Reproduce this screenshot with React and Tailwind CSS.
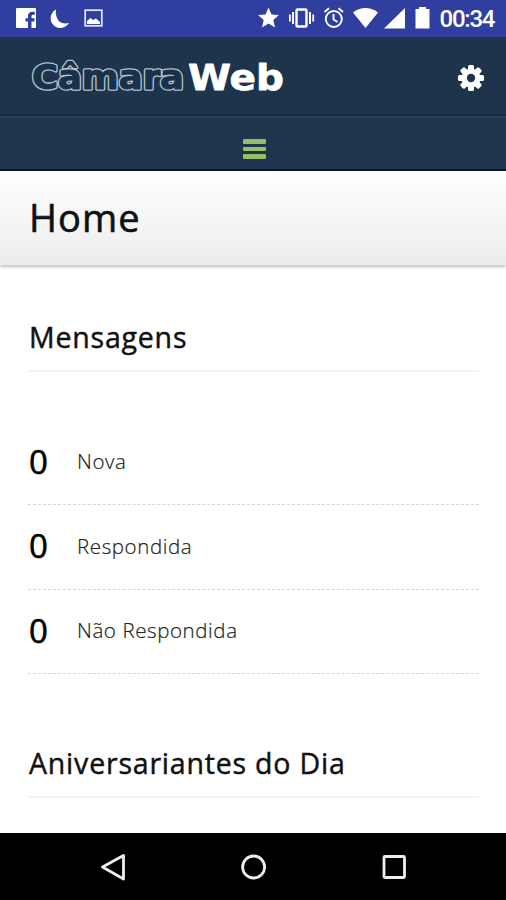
import React from 'react';

const MESSAGES = [
  { label: 'Nova', count: 0 },
  { label: 'Respondida', count: 0 },
  { label: 'Não Respondida', count: 0 },
];

function StatusBar() {
  return (
    <div className="h-[37px] shrink-0 bg-[#303f9f] text-white">
      <svg width="506" height="37" viewBox="0 0 506 37" fill="#fff">
        {/* Facebook */}
        <path d="M17 8h18a1 1 0 0 1 1 1v18a1 1 0 0 1-1 1h-3.500v-6.500h2.700l.5-3.300h-3.200v-1.800c0-1 .5-1.600 1.600-1.600h1.700v-3h-2.600c-2.700 0-4.200 1.800-4.200 4v2.400h-2.500v3.300H28V28H17a1 1 0 0 1-1-1V9a1 1 0 0 1 1-1z" />
        {/* Moon */}
        <path d="M56 9.500a9.800 9.800 0 1 0 13 13.500c-4 1-8.500.5-10.700-2.800-2.300-3.200-2.800-7-2.300-10.700z" />
        {/* Picture */}
        <rect x="85.200" y="10.200" width="16.600" height="15.600" fill="none" stroke="#e8eaf6" strokeWidth="1.700" />
        <path d="M87 24v-3l3.500-3 2.500 2 3-1.500 4 3.500v2z" />
        {/* Star */}
        <path d="M268.500 7.500l3 7 7.500.6-5.700 5 1.700 7.400-6.500-4-6.500 4 1.700-7.400-5.700-5 7.500-.6z" />
        {/* Vibrate */}
        <rect x="296.500" y="9.500" width="10" height="17" rx="1" fill="none" stroke="#fff" strokeWidth="2.400" />
        <path d="M289 14.500h1.800v7H289zM292 12h2v12h-2zM309 12h2v12h-2zM312.300 14.500h1.800v7h-1.800z" />
        {/* Alarm */}
        <g fill="none" stroke="#fff" strokeWidth="1.900">
          <circle cx="333.800" cy="19" r="8" />
          <path d="M333.500 14v5.500l4 2.500M324.500 12l4.500-3.700M343 12l-4.500-3.700" />
        </g>
        {/* Wifi, signal, battery */}
        <path d="M353 12.500c7-6 18-6 25 0L365.500 28z" />
        <path d="M384 28.500L405 8v20.500z" />
        <path d="M419 7h7v2h3.500v19.500h-14V9h3.500z" />
        <text x="439.500" y="26.500" fontFamily="Roboto, sans-serif" fontSize="24" fontWeight="500" textLength="56">00:34</text>
      </svg>
    </div>
  );
}

function Logo() {
  return (
    <svg width="260" height="60" viewBox="0 0 260 60" fontFamily="'DejaVu Sans', sans-serif" fontWeight="700" strokeLinejoin="round">
      <text x="3" y="42.500" fontSize="34" textLength="152" lengthAdjust="spacingAndGlyphs" fill="#b4c3ce" stroke="#b4c3ce" strokeWidth="3.600">Câmara</text>
      <text x="3" y="42.500" fontSize="34" textLength="152" lengthAdjust="spacingAndGlyphs" fill="#19324a" stroke="#19324a" strokeWidth="1">Câmara</text>
      <text x="159" y="43.500" fontSize="36" textLength="96" lengthAdjust="spacingAndGlyphs" fill="#fff" stroke="#fff" strokeWidth="0.800">Web</text>
    </svg>
  );
}

function GearIcon() {
  return (
    <svg width="28" height="28" viewBox="0 0 28 28">
      <g fill="#fff">
        <rect x="11" y="1" width="6" height="26" rx="1.500" />
        <rect x="11" y="1" width="6" height="26" rx="1.500" transform="rotate(45 14 14)" />
        <rect x="11" y="1" width="6" height="26" rx="1.500" transform="rotate(90 14 14)" />
        <rect x="11" y="1" width="6" height="26" rx="1.500" transform="rotate(135 14 14)" />
        <circle cx="14" cy="14" r="9.500" />
      </g>
      <circle cx="14" cy="14" r="4.200" fill="#1d344c" />
    </svg>
  );
}

function SectionTitle({ children }) {
  return (
    <h2 className="h-[62px] border-b-2 border-[#f3f3f3] pl-px text-[28.500px] leading-[55px] tracking-[0.800px] text-[#111] [-webkit-text-stroke:0.45px_#111]">
      {children}
    </h2>
  );
}

function NavBar() {
  return (
    <nav className="flex h-[67px] shrink-0 items-center justify-center bg-black">
      <svg width="506" height="67" viewBox="0 0 506 67" fill="none" stroke="#eee" strokeWidth="2.800">
        <path d="M123.500 22.500v23.500L102.500 34z" strokeLinejoin="round" />
        <circle cx="253.600" cy="34" r="11" />
        <rect x="384" y="23.500" width="20.500" height="21" rx="1" />
      </svg>
    </nav>
  );
}

export default function App() {
  return (
    <div className="flex h-[900px] w-[506px] flex-col overflow-hidden bg-white font-['Open_Sans',sans-serif]">
      <StatusBar />
      <header className="flex h-[79px] shrink-0 items-center justify-between border-b-2 border-[#162b3b] bg-[#1d344c] pr-[21px] pl-[29px]">
        <Logo />
        <div className="pt-1">
          <GearIcon />
        </div>
      </header>
      <div className="flex h-[55px] shrink-0 justify-center border-t-2 border-b-2 border-t-[#2a4359] border-b-[#07183b] bg-[#1f354e] pt-[21px] pl-[3px]">
        <div className="flex w-[23px] flex-col gap-[3px]">
          <span className="h-[4.500px] rounded-[1px] bg-[#94bd66]" />
          <span className="h-[4.500px] rounded-[1px] bg-[#94bd66]" />
          <span className="h-[4.500px] rounded-[1px] bg-[#94bd66]" />
        </div>
      </div>
      <div className="h-[94px] shrink-0 bg-linear-to-b from-white to-[#ececec] pl-[29px] shadow-[0_2px_3px_rgba(0,0,0,0.25)]">
        <h1 className="text-[38px] leading-[92px] tracking-[1.100px] text-[#111] [-webkit-text-stroke:0.6px_#111]">Home</h1>
      </div>
      <main className="min-h-0 flex-1 overflow-hidden pt-[45px] pr-[27px] pl-[28px]">
        <SectionTitle>Mensagens</SectionTitle>
        <ul className="pt-[49px]">
          {MESSAGES.map((m) => (
            <li key={m.label} className="flex h-[84.400px] items-center border-b border-dashed border-[#d6d6d6] pb-[2px]">
              <span className="w-[49px] pl-px text-[33px] text-black [-webkit-text-stroke:0.6px_#000]">{m.count}</span>
              <span className="text-[20.500px] font-light tracking-[0.600px] text-[#222] [-webkit-text-stroke:0.2px_#222]">{m.label}</span>
            </li>
          ))}
        </ul>
        <div className="pt-[62px]">
          <SectionTitle>Aniversariantes do Dia</SectionTitle>
        </div>
      </main>
      <NavBar />
    </div>
  );
}
